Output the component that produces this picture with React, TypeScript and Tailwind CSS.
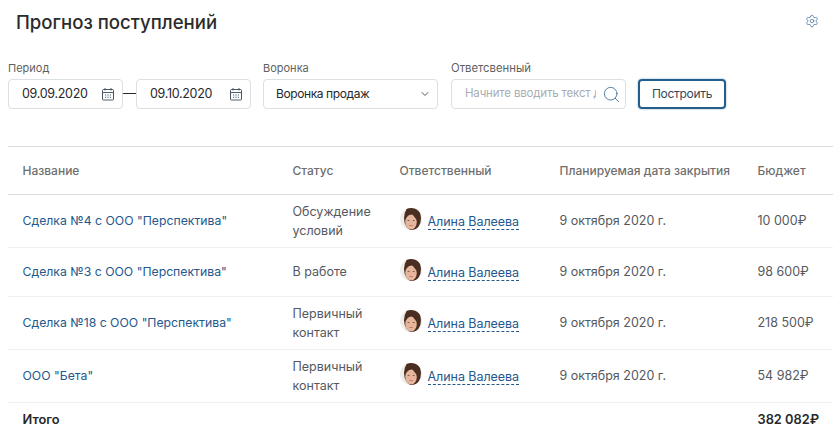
import { Settings, Search, ChevronDown } from "lucide-react"

const rows = [
  { name: 'Сделка №4 с ООО "Перспектива"', status: ["Обсуждение", "условий"], budget: "10 000", h: "h-[53px]" },
  { name: 'Сделка №3 с ООО "Перспектива"', status: ["В работе"], budget: "98 600", h: "h-[49px]" },
  { name: 'Сделка №18 с ООО "Перспектива"', status: ["Первичный", "контакт"], budget: "218 500", h: "h-[53px]" },
  { name: 'ООО "Бета"', status: ["Первичный", "контакт"], budget: "54 982", h: "h-[53px]" },
]

const cols = "grid grid-cols-[270px_107px_160px_198px_90px] pl-[14.5px] items-center"

function Avatar({ id }: { id: number }) {
  return (
    <svg viewBox="0 0 22 22" className="w-[22px] h-[22px] shrink-0 -mt-[5px]">
      <defs>
        <clipPath id={`av${id}`}>
          <circle cx="11" cy="11" r="11" />
        </clipPath>
        <filter id={`soft${id}`} x="-20%" y="-20%" width="140%" height="140%">
          <feGaussianBlur stdDeviation="0.7" />
        </filter>
      </defs>
      <g clipPath={`url(#av${id})`}>
        <rect width="22" height="22" fill="#efede9" />
        <g filter={`url(#soft${id})`}>
          <ellipse cx="12.5" cy="10" rx="8.500" ry="12.500" fill="#4b2f22" />
          <ellipse cx="11" cy="14" rx="5.800" ry="7.500" fill="#e6b69c" />
          <path d="M5 11c2-3 5-5 8-5.500-0.500 2 2 4 4 6.500 0-5-3-8-6-8-3 0-6 3-6 7z" fill="#4b2f22" />
          <ellipse cx="8.500" cy="12.500" rx="1.100" ry="0.500" fill="#7a5240" />
          <ellipse cx="13.700" cy="12.500" rx="1.100" ry="0.500" fill="#7a5240" />
          <ellipse cx="11" cy="17.500" rx="2.200" ry="0.600" fill="#c57a6c" />
        </g>
      </g>
    </svg>
  )
}

function CalendarIcon() {
  return (
    <svg viewBox="0 0 14 14" className="w-[14px] h-[14px]" fill="none" stroke="#4d5a66" strokeWidth="1">
      <rect x="1.500" y="2.500" width="11" height="10.500" rx="1" />
      <path d="M1.500 5.500h11M4 1v2.500M10 1v2.500" />
      <path d="M4 8h1.200M6.400 8h1.200M8.800 8h1.200M4 10.300h1.200M6.400 10.300h1.200M8.800 10.300h1.200" strokeWidth="1.100" />
    </svg>
  )
}

function DateField({ value }: { value: string }) {
  return (
    <div className="w-[115px] h-[30px] border border-[#dcdfe3] rounded-[4px] flex items-center pl-[13px] pr-[7px] justify-between">
      <span className="text-[12.5px] tracking-[-0.3px] text-[#26282b]">{value}</span>
      <CalendarIcon />
    </div>
  )
}

export default function App() {
  return (
    <div className="w-[836px] h-[437px] overflow-hidden bg-white font-['Inter','Noto_Sans',sans-serif] text-[#4f4f4f]">
      <div className="flex items-center justify-between h-[45px] pl-[16px] pr-[17px]">
        <h1 className="text-[18.6px] font-medium text-[#2b2b2b]">Прогноз поступлений</h1>
        <Settings className="w-[14px] h-[14px] text-[#3f6f9c] -mt-[3px]" strokeWidth={1.25} />
      </div>

      <div className="flex items-end pl-[8px] mt-[16px]">
        <div className="flex flex-col gap-[4px]">
          <label className="text-[11px] leading-[14px] text-[#5f5f5f]">Период</label>
          <div className="flex items-center">
            <DateField value="09.09.2020" />
            <span className="w-[13px] text-center text-[13px] text-[#26282b]">—</span>
            <DateField value="09.10.2020" />
          </div>
        </div>
        <div className="flex flex-col gap-[4px] ml-[12px]">
          <label className="text-[11px] leading-[14px] text-[#5f5f5f]">Воронка</label>
          <div className="w-[175px] h-[30px] border border-[#dcdfe3] rounded-[4px] flex items-center justify-between pl-[12px] pr-[6px]">
            <span className="text-[12px] tracking-[-0.4px] text-[#26282b]">Воронка продаж</span>
            <ChevronDown className="w-[12px] h-[12px] text-[#4d5a66]" />
          </div>
        </div>
        <div className="flex flex-col gap-[4px] ml-[13px]">
          <label className="text-[11.3px] leading-[14px] text-[#5f5f5f]">Ответсвенный</label>
          <div className="w-[175px] h-[30px] border border-[#dcdfe3] rounded-[4px] flex items-center pl-[13px] pr-[4px] justify-between">
            <input
              readOnly
              placeholder="Начните вводить текст для поиска"
              className="w-[131px] outline-none bg-transparent text-[11.5px] tracking-[-0.18px] placeholder:text-[#a9adb2]"
            />
            <Search className="w-[19px] h-[19px] text-[#2f5f8a] shrink-0" strokeWidth={1} />
          </div>
        </div>
        <button className="ml-[12px] w-[88px] h-[30px] border-2 border-[#235d8c] rounded-[4px] text-[12px] tracking-[-0.3px] text-[#33475b] shadow-[0_0_2px_#7aa5c8]">
          Построить
        </button>
      </div>

      <div className="ml-[8px] w-[825px] mt-[37px] border-t border-[#dcdcdc]">
        <div className={`${cols} h-[48px] border-b border-[#dcdcdc] text-[12px] font-medium text-[#6f6f6f]`}>
          <div>Название</div>
          <div>Статус</div>
          <div>Ответственный</div>
          <div>Планируемая дата закрытия</div>
          <div>Бюджет</div>
        </div>
        {rows.map((row, i) => (
          <div key={i} className={`${cols} ${row.h} border-b border-[#f0f0f0] text-[12.5px]`}>
            <a className="text-[12.25px] text-[#24588c]">{row.name}</a>
            <div className="leading-[19.5px] text-[#55595e]">
              {row.status.map((s) => (
                <div key={s}>{s}</div>
              ))}
            </div>
            <div className="flex items-center gap-[6px]">
              <Avatar id={i} />
              <span className="text-[#24588c] border-b border-dashed border-[#24588c] leading-[15px] mt-[1px] tracking-[-0.05px]">Алина Валеева</span>
            </div>
            <div className="text-[#55595e]">9 октября 2020 г.</div>
            <div className="text-[#55595e]">{row.budget}₽</div>
          </div>
        ))}
        <div className={`${cols} h-[34px] text-[12.8px] font-semibold text-[#26282b]`}>
          <div className="col-span-4">Итого</div>
          <div>382 082₽</div>
        </div>
      </div>
    </div>
  )
}
